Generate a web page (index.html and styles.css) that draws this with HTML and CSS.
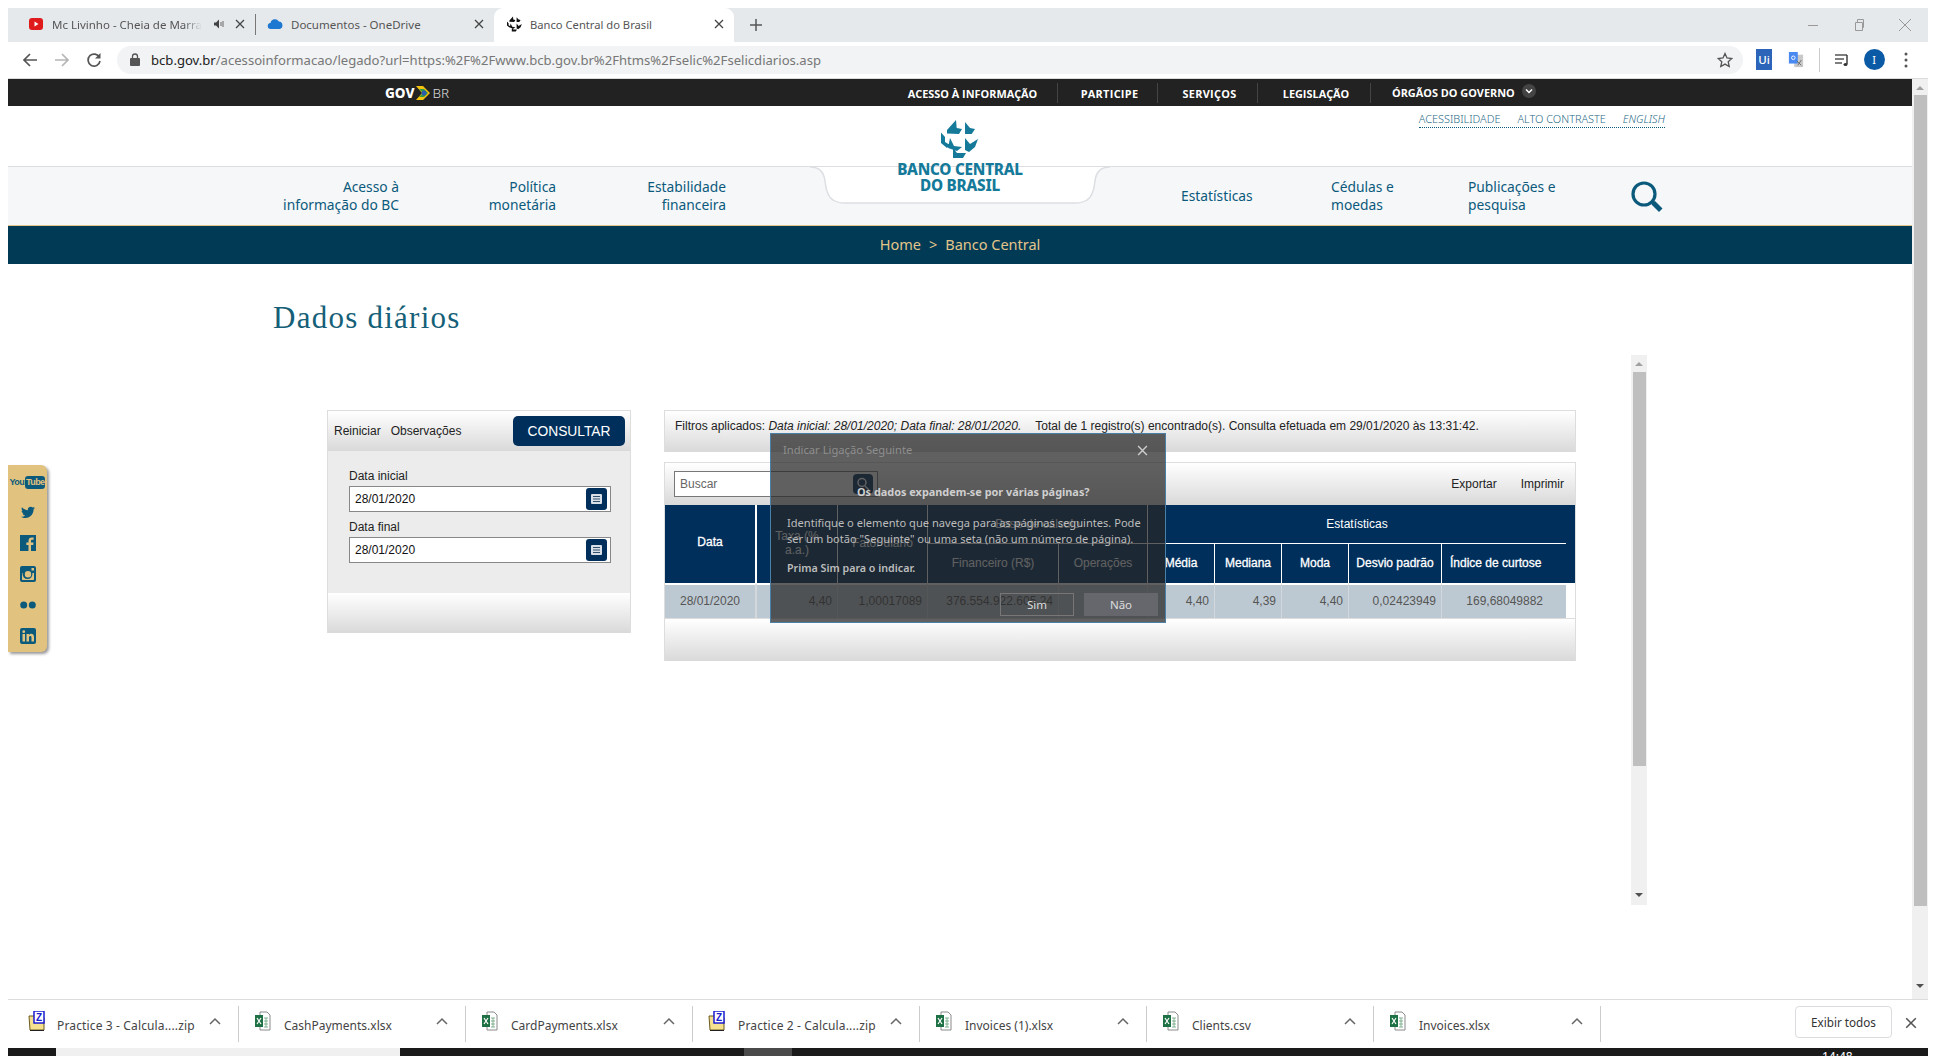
FILE: index.html
```html
<!DOCTYPE html>
<html lang="pt-BR">
<head>
<meta charset="utf-8">
<title>Banco Central do Brasil</title>
<link rel="stylesheet" href="styles.css">
</head>
<body>
<svg class="defs" aria-hidden="true">
  <symbol id="x" viewBox="0 0 10 10"><path d="M1 1l8 8M9 1l-8 8" fill="none" stroke="currentColor" stroke-width="1.3"/></symbol>
  <symbol id="bcb" viewBox="0 0 60 48">
    <path d="M26 5l.7 8 5.300 1-3 5-12-.5V15zM35 7l5 6 5 1-3.300 5H35zM11 17.500l4 4.500v5l5 3-3 3-6-5zM20 23l4 8 8 1-5 4-9-3zM23 33l4 5h9l-3 5H23zM35 23l5 6 8-5-3 8-6 5-4-2z"/>
  </symbol>
  <symbol id="excel" viewBox="0 0 16 20">
    <path d="M5 1h7l3 3v15H5z" fill="#fff" stroke="#8a8a8a"/>
    <path d="M9 7h4M9 10h4M9 13h4M9 16h4M11 7v9" stroke="#7fb08f" fill="none"/>
    <rect x="0" y="4" width="8" height="12" fill="#1e7145"/>
    <path d="M2 7l4 6M6 7l-4 6" stroke="#fff" stroke-width="1.2"/>
  </symbol>
  <symbol id="zip" viewBox="0 0 18 20">
    <path d="M1 5h12l3 2v12H2z" fill="#f4e08e" stroke="#6d5a1c"/>
    <path d="M2 19h14v1H2z" fill="#222"/>
    <rect x="6" y="0" width="10" height="12" fill="#fff" stroke="#1a1ad0" stroke-width="1.5"/>
    <text x="11" y="10" class="zip-z">Z</text>
  </symbol>
  <symbol id="cal" viewBox="0 0 21 22">
    <rect width="21" height="22" rx="3" fill="#002f5c"/>
    <rect x="5" y="6" width="11" height="10" rx="1" fill="#d8dfe6"/>
    <path d="M7 8.500h7M7 11h7M7 13.500h7" stroke="#31506e"/>
  </symbol>
  <symbol id="caret" viewBox="0 0 12 8"><path d="M1 7l5-5 5 5" fill="none" stroke="currentColor" stroke-width="1.5"/></symbol>
</svg>

<div class="screen">
  <div class="tabstrip">
    <div class="tab tab-one">
      <svg class="fav" viewBox="0 0 16 16"><rect x="1" y="2" width="14" height="12" rx="3" fill="#e01b1b"/><path d="M6.500 5.500v5l4-2.500z" fill="#fff"/></svg>
      <span class="tab-title fade">Mc Livinho - Cheia de Marra</span>
      <svg class="speaker" viewBox="0 0 12 12"><path d="M1 4.500h2l3-3v9l-3-3H1z" fill="#444"/><path d="M8 4v4M10 3v6" stroke="#666"/></svg>
      <svg class="close"><use href="#x"/></svg>
    </div>
    <div class="tab tab-two">
      <svg class="fav" viewBox="0 0 16 16"><path d="M4 13a3 3 0 0 1-.5-6 4.500 4.500 0 0 1 8.300-1.500A3.800 3.800 0 0 1 12.500 13z" fill="#1c78d0"/></svg>
      <span class="tab-title">Documentos - OneDrive</span>
      <svg class="close"><use href="#x"/></svg>
    </div>
    <div class="tab tab-active">
      <svg class="fav fav-bcb" viewBox="10 4 37 40"><use href="#bcb" width="60" height="48"/></svg>
      <span class="tab-title">Banco Central do Brasil</span>
      <svg class="close"><use href="#x"/></svg>
    </div>
    <svg class="newtab" viewBox="0 0 12 12"><path d="M6 0v12M0 6h12" stroke="#555" stroke-width="1.500"/></svg>
    <div class="winctl">
      <svg class="win" viewBox="0 0 14 14"><path d="M2 7.500h10" stroke="#999"/></svg>
      <svg class="win" viewBox="0 0 14 14"><path d="M3.500 4.500h7v8h-7zM5.500 4.500v-3h6v8h-1" fill="none" stroke="#999"/></svg>
      <svg class="win" viewBox="0 0 14 14"><path d="M1 1l12 12M13 1L1 13" stroke="#999"/></svg>
    </div>
  </div>

  <div class="toolbar">
    <div class="tool"><svg viewBox="0 0 16 16"><path d="M15 8H2M8 2L2 8l6 6" fill="none" stroke="#555" stroke-width="1.700"/></svg></div>
    <div class="tool"><svg viewBox="0 0 16 16"><path d="M1 8h13M8 2l6 6-6 6" fill="none" stroke="#b5b5b5" stroke-width="1.700"/></svg></div>
    <div class="tool"><svg viewBox="0 0 16 16"><path d="M13.500 5.500A6 6 0 1 0 14 9" fill="none" stroke="#555" stroke-width="1.700"/><path d="M14.500 1v5.500H9z" fill="#555"/></svg></div>
    <div class="omnibox">
      <svg class="lock" viewBox="0 0 10 13"><rect y="5" width="10" height="8" rx="1" fill="#555"/><path d="M2.500 5.500V3.500a2.500 2.500 0 0 1 5 0v2" fill="none" stroke="#555" stroke-width="1.300"/></svg>
      <span class="url"><span class="url-host">bcb.gov.br</span>/acessoinformacao/legado?url=https:%2F%2Fwww.bcb.gov.br%2Fhtms%2Fselic%2Fselicdiarios.asp</span>
      <svg class="star" viewBox="0 0 16 16"><path d="M8 1.500l2 4.500 4.800.5-3.600 3.200 1 4.800L8 12.100l-4.200 2.400 1-4.800L1.200 6.500 6 6z" fill="none" stroke="#555" stroke-width="1.300"/></svg>
    </div>
    <div class="tool tool-first"><span class="ext-ui">Ui</span></div>
    <div class="tool"><svg viewBox="0 0 16 18"><rect x="6" y="3" width="10" height="14" fill="#c9c9c9"/><rect x="0" y="0" width="10" height="13" fill="#4a8af0"/><path d="M9 10l5 5M14 9l-4 6" stroke="#666"/><circle cx="5" cy="6.500" r="2" fill="none" stroke="#fff"/></svg></div>
    <span class="tool-sep"></span>
    <div class="tool"><svg viewBox="0 0 16 16"><path d="M1 3h12M1 7h9M1 11h7" stroke="#555" stroke-width="1.400"/><path d="M13 3v9" stroke="#333" stroke-width="1.400"/><ellipse cx="11.500" cy="12.500" rx="2" ry="1.500" fill="#333"/></svg></div>
    <div class="tool"><span class="avatar">I</span></div>
    <div class="tool"><svg viewBox="0 0 4 16"><circle cx="2" cy="2" r="1.500" fill="#555"/><circle cx="2" cy="8" r="1.500" fill="#555"/><circle cx="2" cy="14" r="1.500" fill="#555"/></svg></div>
  </div>

  <div class="viewport">
    <div class="page">
      <div class="govbar">
        <div class="govlogo"><b>GOV</b><svg viewBox="0 0 16 14"><path d="M0 0h7l7 7-7 7H0l6-7z" fill="#f4c20d"/><path d="M3 3h5l4 4-4 4H3l4-4z" fill="#2d9a49"/><circle cx="8" cy="7" r="2.500" fill="#2a5db0"/></svg><span>BR</span></div>
        <nav class="govmenu">
          <a>ACESSO À INFORMAÇÃO</a>
          <a class="gov-wide">PARTICIPE</a>
          <a class="gov-wide">SERVIÇOS</a>
          <a class="gov-shift">LEGISLAÇÃO</a>
          <a class="govlast">ÓRGÃOS DO GOVERNO<svg class="gov-chev" viewBox="0 0 14 14"><circle cx="7" cy="7" r="7" fill="#444"/><path d="M4 5.500l3 3 3-3" fill="none" stroke="#fff" stroke-width="1.500"/></svg></a>
        </nav>
      </div>

      <header class="brand">
        <div class="quick">
          <a>ACESSIBILIDADE</a>
          <a>ALTO CONTRASTE</a>
          <a class="quick-en">ENGLISH</a>
        </div>
      </header>

      <nav class="mainnav">
        <a class="nav-l">Acesso à<br>informação do BC</a>
        <a class="nav-l">Política<br>monetária</a>
        <a class="nav-l">Estabilidade<br>financeira</a>
        <span></span>
        <a>Estatísticas</a>
        <a>Cédulas e<br>moedas</a>
        <a>Publicações e<br>pesquisa</a>
        <svg class="nav-search" viewBox="0 0 32 32"><circle cx="13" cy="13" r="11" fill="none" stroke="#0b5a7c" stroke-width="3.200"/><path d="M21 21l3-1 7.500 7.500-3.500 3.500-7.500-7.500z" fill="#0b5a7c"/></svg>
      </nav>

      <div class="crumbs"><a>Home</a><span>&gt;</span><a>Banco Central</a></div>

      <h1 class="title">Dados diários</h1>

      <main class="content">
        <section class="filters">
          <div class="filters-top">
            <a>Reiniciar</a>
            <a>Observações</a>
            <button class="consultar">CONSULTAR</button>
          </div>
          <div class="filters-body">
            <label class="flabel">Data inicial</label>
            <div class="datefield"><span>28/01/2020</span><svg class="cal"><use href="#cal"/></svg></div>
            <label class="flabel">Data final</label>
            <div class="datefield"><span>28/01/2020</span><svg class="cal"><use href="#cal"/></svg></div>
          </div>
          <div class="filters-foot"></div>
        </section>

        <section class="results">
          <div class="summary">Filtros aplicados: <i>Data inicial: 28/01/2020; Data final: 28/01/2020.</i><span class="summary-total">Total de 1 registro(s) encontrado(s). Consulta efetuada em 29/01/2020 às 13:31:42.</span></div>
          <div class="tablebox">
            <div class="tabletools">
              <div class="searchfield"><span>Buscar</span><span class="searchbtn"><svg viewBox="0 0 14 14"><circle cx="6" cy="5.500" r="4" fill="none" stroke="#fff" stroke-width="1.500"/><path d="M9 9l4 4" stroke="#fff" stroke-width="1.500"/></svg></span></div>
              <a class="tool-link">Exportar</a>
              <a class="tool-link">Imprimir</a>
            </div>
            <table class="datatable">
              <colgroup>
                <col class="c-data"><col class="c-taxa"><col class="c-fator"><col class="c-fin"><col class="c-ops">
                <col class="c-med"><col class="c-med"><col class="c-med"><col class="c-desv"><col class="c-curt"><col class="c-end">
              </colgroup>
              <thead>
                <tr class="hr1">
                  <th rowspan="2" class="th-data">Data</th>
                  <th rowspan="2" class="th-mid">Taxa (%<br>a.a.)</th>
                  <th rowspan="2" class="th-mid">Fator diário</th>
                  <th colspan="2">Base de cálculo</th>
                  <th colspan="5" class="th-stats">Estatísticas</th>
                  <th rowspan="2" class="th-end"></th>
                </tr>
                <tr class="hr2">
                  <th>Financeiro (R$)</th><th>Operações</th>
                  <th class="th-strong">Média</th><th class="th-strong">Mediana</th><th class="th-strong">Moda</th><th class="th-strong">Desvio padrão</th><th class="th-strong th-curt">Índice de curtose</th>
                </tr>
              </thead>
              <tbody>
                <tr>
                  <td class="td-c">28/01/2020</td><td>4,40</td><td>1,00017089</td><td>376.554.922.605,24</td><td class="td-ops">952</td>
                  <td>4,40</td><td>4,39</td><td>4,40</td><td>0,02423949</td><td class="td-curt">169,68049882</td><td class="td-end"></td>
                </tr>
              </tbody>
            </table>
            <div class="tablefoot"></div>
          </div>
        </section>

        <div class="inner-scroll">
          <span class="arrow-up"></span>
          <span class="inner-thumb"></span>
          <span class="arrow-down"></span>
        </div>
      </main>

      <svg class="notch" viewBox="0 0 300 38"><path d="M0 1c9 0 14 5 15 14 1 10 3 16 8 19 3 2 7 3 12 3H265c5 0 9-1 12-3 5-3 7-9 8-19 1-9 6-14 15-14" fill="#fff" stroke="#dcdee2" stroke-width="1.500"/></svg>
      <div class="logo">
        <svg class="logo-mark"><use href="#bcb"/></svg>
        <div class="logo-text">BANCO CENTRAL<br>DO BRASIL</div>
      </div>

      <aside class="social">
        <span class="yt">You<b>Tube</b></span>
        <svg viewBox="0 0 24 24"><path d="M22.460 6c-.77.35-1.600.58-2.460.69.88-.53 1.560-1.370 1.880-2.380-.83.5-1.750.85-2.720 1.050C18.370 4.500 17.260 4 16 4c-2.350 0-4.270 1.920-4.270 4.290 0 .34.04.67.11.98C8.280 9.090 5.110 7.380 3 4.790c-.37.63-.58 1.370-.58 2.150 0 1.490.75 2.810 1.910 3.560-.71 0-1.370-.2-1.950-.5v.03c0 2.080 1.480 3.820 3.440 4.210a4.220 4.220 0 0 1-1.930.07 4.280 4.280 0 0 0 4 2.980 8.521 8.521 0 0 1-5.330 1.840c-.34 0-.68-.02-1.020-.06C3.440 20.290 5.700 21 8.120 21 16 21 20.330 14.460 20.330 8.790c0-.19 0-.37-.01-.56.84-.6 1.560-1.360 2.140-2.230z"/></svg>
        <svg viewBox="0 0 16 16"><path d="M0 0h16v16h-5v-6h2.200l.3-2.500H11V6c0-.8.3-1.200 1.200-1.200h1.400V2.500c-.4 0-1-.1-1.800-.1-2 0-3.300 1.200-3.300 3.300v1.800H6.300V10h2.200v6H0z"/></svg>
        <svg viewBox="0 0 16 16"><path fill-rule="evenodd" d="M2 0h12a2 2 0 0 1 2 2v12a2 2 0 0 1-2 2H2a2 2 0 0 1-2-2V2a2 2 0 0 1 2-2zm9.500 2v2.500H14V2zM2 7v6.500c0 .3.2.5.5.5h11c.3 0 .5-.2.500-.5V7h-1.600a5 5 0 1 1-9.800 0zm6-2a3.200 3.200 0 1 0 0 6.400A3.200 3.200 0 0 0 8 5z"/></svg>
        <svg viewBox="0 0 16 16"><circle cx="3.700" cy="8" r="3.500"/><circle cx="12.300" cy="8" r="3.500"/></svg>
        <svg viewBox="0 0 16 16"><path fill-rule="evenodd" d="M2 0h12a2 2 0 0 1 2 2v12a2 2 0 0 1-2 2H2a2 2 0 0 1-2-2V2a2 2 0 0 1 2-2zm.500 6v7.500H5V6zm1.250-3.700a1.400 1.400 0 1 0 0 2.800 1.400 1.400 0 0 0 0-2.800zM6.500 6v7.500H9V9.500c0-1 .5-1.600 1.300-1.600S11.500 8.500 11.500 9.500v4H14V9c0-2.200-1.200-3.200-2.800-3.200-1.200 0-1.900.6-2.200 1.200V6z"/></svg>
      </aside>

      <div class="dialog" role="dialog">
        <div class="dialog-head"><span>Indicar Ligação Seguinte</span><svg class="dialog-x"><use href="#x"/></svg></div>
        <p class="dialog-q">Os dados expandem-se por várias páginas?</p>
        <p class="dialog-p">Identifique o elemento que navega para as páginas seguintes. Pode<br>ser um botão "Seguinte" ou uma seta (não um número de página).</p>
        <p class="dialog-b">Prima Sim para o indicar.</p>
        <div class="dialog-btns"><button class="btn-sim">Sim</button><button class="btn-nao">Não</button></div>
      </div>
    </div>

    <div class="outer-scroll">
      <span class="arrow-up"></span>
      <span class="outer-thumb"></span>
      <span class="arrow-down"></span>
    </div>
  </div>

  <div class="shelf">
    <div class="dl dl-zip dl-first"><svg class="dl-icon"><use href="#zip"/></svg><span class="dl-name">Practice 3 - Calcula....zip</span><svg class="dl-caret"><use href="#caret"/></svg></div>
    <div class="dl"><svg class="dl-icon"><use href="#excel"/></svg><span class="dl-name">CashPayments.xlsx</span><svg class="dl-caret"><use href="#caret"/></svg></div>
    <div class="dl"><svg class="dl-icon"><use href="#excel"/></svg><span class="dl-name">CardPayments.xlsx</span><svg class="dl-caret"><use href="#caret"/></svg></div>
    <div class="dl dl-zip"><svg class="dl-icon"><use href="#zip"/></svg><span class="dl-name">Practice 2 - Calcula....zip</span><svg class="dl-caret"><use href="#caret"/></svg></div>
    <div class="dl"><svg class="dl-icon"><use href="#excel"/></svg><span class="dl-name">Invoices (1).xlsx</span><svg class="dl-caret"><use href="#caret"/></svg></div>
    <div class="dl"><svg class="dl-icon"><use href="#excel"/></svg><span class="dl-name">Clients.csv</span><svg class="dl-caret"><use href="#caret"/></svg></div>
    <div class="dl"><svg class="dl-icon"><use href="#excel"/></svg><span class="dl-name">Invoices.xlsx</span><svg class="dl-caret"><use href="#caret"/></svg></div>
    <button class="showall">Exibir todos</button>
    <svg class="shelf-x"><use href="#x"/></svg>
  </div>

  <div class="taskbar">
    <span class="tb-a"></span><span class="tb-b"></span><span class="tb-a2"></span><span class="tb-c"></span>
    <span class="tb-clock">14:48</span>
  </div>
</div>
</body>
</html>
```
FILE: styles.css
```css
* { box-sizing: border-box; }
html, body { height: 100%; overflow: hidden; }
body { margin: 0; padding: 8px 0 0 8px; background: #fff; font-family: "Liberation Sans", Arial, sans-serif; font-size: 12px; color: #222; }
.defs { position: absolute; width: 0; height: 0; }
.zip-z { font: bold 10px "Liberation Sans", sans-serif; fill: #1a1ad0; text-anchor: middle; }
.screen { width: 1920px; height: 1048px; display: flex; flex-direction: column; overflow: hidden; }

/* browser chrome */
.tabstrip { height: 34px; flex: none; background: #e6e9ec; display: flex; align-items: stretch; font-family: "Noto Sans", sans-serif; font-size: 11.5px; color: #555; }
.tab { display: flex; align-items: center; position: relative; padding-bottom: 2px; }
.tab-one { width: 248px; padding-left: 20px; padding-right: 10px; }
.tab-one::after { content: ""; position: absolute; right: 0; top: 6px; bottom: 7px; width: 1px; background: #777; }
.tab-two { width: 238px; padding-left: 11px; padding-right: 10px; }
.tab-active { width: 240px; padding-left: 12px; padding-right: 10px; background: #fff; border-radius: 9px 9px 0 0; font-size: 11.2px; }
.fav { width: 16px; height: 16px; flex: none; margin-right: 8px; }
.fav-bcb { fill: #111; }
.tab-title { flex: 1; white-space: nowrap; overflow: hidden; }
.fade { max-width: 150px; -webkit-mask-image: linear-gradient(90deg, #000 88%, transparent); mask-image: linear-gradient(90deg, #000 88%, transparent); }
.speaker { width: 12px; height: 12px; margin-left: 11px; margin-right: 10px; flex: none; }
.close { width: 10px; height: 10px; flex: none; color: #444; }
.newtab { width: 12px; height: 12px; align-self: center; margin-left: 16px; }
.winctl { margin-left: auto; display: flex; align-items: center; gap: 32px; padding-right: 16px; }
.win { width: 14px; height: 14px; }
.toolbar { height: 37px; flex: none; background: #fff; border-bottom: 1px solid #dcdcdc; display: flex; align-items: center; padding: 0 0 1px 6px; }
.tool { width: 32px; display: flex; justify-content: center; align-items: center; flex: none; }
.tool svg { height: 16px; width: 16px; }
.omnibox { width: 1626px; height: 28px; margin-left: 7px; background: #f1f3f4; border-radius: 14px; display: flex; align-items: center; padding: 0 10px 0 13px; flex: none; }
.lock { width: 10px; height: 13px; margin-right: 11px; }
.url { font-family: "Noto Sans", sans-serif; font-size: 13.1px; color: #777; white-space: nowrap; }
.url-host { color: #222; }
.star { width: 16px; height: 16px; margin-left: auto; }
.tool-first { margin-left: 5px; }
.ext-ui { width: 16px; height: 21px; background: #2b64b8; color: #fff; font: 500 11.5px/21px "Noto Sans", sans-serif; text-align: center; }
.tool-sep { width: 1px; height: 24px; background: #ccc; margin: 0 6px 0 7px; }
.avatar { width: 21px; height: 21px; border-radius: 50%; background: #0b5aa5; color: #fff; font: 11px/21px "Noto Sans", sans-serif; text-align: center; }

/* viewport */
.viewport { height: 920px; flex: none; display: flex; }
.page { width: 1904px; position: relative; overflow: hidden; }
.outer-scroll { width: 16px; background: #f0f0f0; display: flex; flex-direction: column; align-items: center; padding-top: 7px; }
.outer-thumb { width: 13px; height: 811px; background: #bfbfbf; margin-top: 5px; }
.arrow-up { width: 0; height: 0; border: 4px solid transparent; border-top: 0; border-bottom: 4px solid #a0a0a0; flex: none; }
.arrow-down { width: 0; height: 0; border: 4px solid transparent; border-bottom: 0; border-top: 4px solid #505050; flex: none; }
.outer-scroll .arrow-down { margin-top: 78px; }

.govbar { height: 27px; background: #222; display: flex; align-items: center; color: #fff; }
.govlogo { display: flex; align-items: center; margin-left: 377px; width: 66px; font: 13.5px "Noto Sans", sans-serif; flex: none; white-space: nowrap; }
.govlogo b { font-weight: 800; }
.govlogo svg { width: 16px; height: 14px; margin: 0 1px; flex: none; }
.govlogo span { font-weight: 300; color: #ddd; }
.govmenu { display: grid; grid-template-columns: 170px 100px 100px 113px auto; margin-left: 437px; font: 700 10.9px "Open Sans", sans-serif; }
.govmenu a { text-align: center; border-right: 1px solid #444; line-height: 22px; height: 20px; white-space: nowrap; }
.govmenu .gov-wide { padding-left: 4px; letter-spacing: .3px; }
.govmenu .gov-shift { padding-left: 4px; }
.govmenu .govlast { border: 0; padding-left: 21px; display: flex; align-items: center; }
.gov-chev { width: 14px; height: 14px; margin: -4px 0 0 7px; }

.brand { height: 60px; display: flex; justify-content: flex-end; padding: 6px 247px 0 0; }
.quick { height: 16px; display: flex; gap: 17px; border-bottom: 1px dotted #0b5a7c; font: 10.9px/14px "Noto Sans", sans-serif; color: #1f6a86; font-weight: 300; }
.quick-en { font-style: italic; }

.mainnav { height: 60px; background: #f6f7f9; border-top: 1px solid #dcdee2; border-bottom: 1px solid #e3c58a; display: grid; grid-template-columns: 116px 157px 170px 455px 150px 137px 163px 32px; padding: 0 0 1px 275px; align-items: center; font: 13.8px/17.500px "Noto Sans", sans-serif; color: #0b5a7c; white-space: nowrap; }
.nav-l { text-align: right; }
.nav-search { width: 32px; height: 32px; margin-top: 3px; }
.crumbs { height: 38px; background: #013a55; color: #e3c58a; display: flex; justify-content: center; align-items: center; gap: 8px; font: 14.5px "Noto Sans", sans-serif; padding-bottom: 2px; }

.title { margin: 0; height: 91px; padding: 34px 0 0 265px; font: 400 31px/40px "Liberation Serif", serif; color: #155f78; letter-spacing: 1.25px; }

.content { display: flex; align-items: flex-start; padding: 0 0 0 319px; position: relative; height: 550px; }
.filters { width: 304px; margin-top: 55px; border: 1px solid #ddd; border-width: 1px 1px 0; flex: none; }
.filters-top { height: 40px; display: flex; align-items: center; padding: 0 5px 0 6px; gap: 10px; background: linear-gradient(#fff, #d9d9d9); color: #222; }
.consultar { margin-left: auto; width: 112px; height: 30px; border: 0; border-radius: 5px; background: #002f5c; color: #fff; font: 13.8px "Liberation Sans", sans-serif; }
.filters-body { height: 142px; background: #ececec; padding: 18px 21px 0 21px; }
.flabel { display: block; line-height: 15px; color: #222; }
.datefield { height: 26px; width: 262px; margin: 2px 0 8px; background: #fff; border: 1px solid #888; display: flex; align-items: center; justify-content: space-between; padding: 0 3px 0 5px; color: #111; }
.cal { width: 21px; height: 22px; }
.filters-foot { height: 40px; background: linear-gradient(#fff, #d9d9d9); }

.results { width: 912px; margin: 55px 0 0 33px; flex: none; }
.summary { height: 42px; border: 1px solid #ddd; border-bottom: 0; padding: 8px 0 0 10px; line-height: 15px; background: linear-gradient(#fff, #d9d9d9); color: #222; white-space: nowrap; }
.summary-total { margin-left: 14px; }
.tablebox { margin-top: 10px; border: 1px solid #ddd; border-bottom: 0; }
.tabletools { height: 42px; display: flex; align-items: center; padding: 0 11px 0 9px; background: linear-gradient(#fff, #d9d9d9); }
.searchfield { width: 204px; height: 26px; background: #fff; border: 1px solid #777; display: flex; align-items: center; justify-content: space-between; padding: 0 4px 0 5px; color: #666; margin-right: auto; }
.searchbtn { width: 20px; height: 20px; background: #002f5c; border-radius: 4px; display: flex; align-items: center; justify-content: center; }
.searchbtn svg { width: 14px; height: 14px; }
.tool-link { color: #222; margin-left: 24px; }
.datatable { width: 910px; table-layout: fixed; border-collapse: separate; border-spacing: 0; background: #fff; }
.c-data { width: 92px; } .c-taxa { width: 81px; } .c-fator { width: 90px; } .c-fin { width: 131px; } .c-ops { width: 89px; }
.c-med { width: 67px; } .c-desv { width: 93px; } .c-curt { width: 124px; } .c-end { width: 9px; }
.datatable th { background: #002f5c; color: #fff; font-weight: 400; border-right: 1px solid #fff; padding: 0; }
.datatable .th-data { border-right: 2px solid #fff; padding-bottom: 4px; -webkit-text-stroke: .3px #fff; }
.datatable .th-mid { padding-bottom: 2px; }
.datatable .th-strong { -webkit-text-stroke: .3px #fff; }
.datatable .th-curt { text-align: left; padding-left: 8px; border-right: 0; }
.hr1 th { height: 38px; padding-bottom: 1px; }
.hr2 th { height: 40px; border-top: 1px solid #fff; padding-bottom: 2px; }
.datatable .th-stats { border-right: 0; }
.datatable .th-end { border-right: 0; }
.datatable td { background: #bdc9d2; height: 35px; padding: 0 5px 1px 0; text-align: right; color: #555; border-right: 1px solid #d3d8dc; border-top: 2px solid #fff; }
.datatable .td-c { text-align: center; padding-right: 0; border-right-width: 2px; }
.datatable .td-ops { padding-right: 15px; }
.datatable .td-curt { padding-right: 23px; border-right: 0; }
.datatable .td-end { background: #fff; border: 0; border-top: 2px solid #fff; padding: 0; }
.tablefoot { height: 43px; border-top: 1px solid #ddd; background: linear-gradient(#fff, #d9d9d9); }

.inner-scroll { width: 16px; height: 550px; margin-left: 55px; background: #f0f0f0; display: flex; flex-direction: column; align-items: center; padding-top: 7px; flex: none; }
.inner-thumb { width: 13px; height: 394px; background: #bfbfbf; margin-top: 6px; }
.inner-scroll .arrow-down { margin-top: 127px; }

/* things lying over the page */
.notch { position: absolute; left: 802px; top: 87px; width: 300px; height: 38px; }
.logo { position: absolute; left: 889px; top: 38px; width: 126px; text-align: center; color: #157a9a; }
.logo-mark { width: 60px; height: 48px; fill: #157a9a; display: block; margin: -2px auto -2px; }
.logo-text { font: 800 15.300px/16px "Noto Sans", sans-serif; white-space: nowrap; letter-spacing: -.25px; margin: 0 -5px; }

.social { position: absolute; left: 0; top: 386px; width: 39px; height: 187px; background: #e2c27f; border-radius: 0 6px 6px 0; box-shadow: 2px 2px 3px rgba(0,0,0,.4); display: flex; flex-direction: column; align-items: center; padding-top: 11px; fill: #0b5a7c; }
.social svg { width: 16px; height: 16px; margin-top: 15px; flex: none; }
.yt { font: 700 9px/13px "Liberation Sans", sans-serif; color: #0b5a7c; white-space: nowrap; letter-spacing: -.6px; height: 13px; }
.yt b { display: inline-block; background: #0b5a7c; color: #e2c27f; border-radius: 3px; padding: 0 1px; margin-left: 1px; }

.dialog { position: absolute; left: 762px; top: 354px; width: 396px; height: 190px; background: rgba(38,38,38,.733); border: 1px solid #4a7fa8; color: #bdbdbd; font: 11.1px/16px "Noto Sans", sans-serif; }
.dialog-head { display: flex; justify-content: space-between; align-items: center; padding: 2px 17px 0 12px; height: 30px; color: #8e8e8e; font-size: 11.2px; }
.dialog-x { width: 11px; height: 11px; color: #ccc; }
.dialog-q { margin: 20px 0 0 86px; font-weight: 700; color: #cfcfcf; font-size: 10.9px; line-height: 16px; white-space: nowrap; }
.dialog-p { margin: 15px 0 0 16px; white-space: nowrap; }
.dialog-b { margin: 13px 0 0 16px; font-weight: 600; font-size: 10.7px; }
.dialog-btns { position: absolute; right: 7px; bottom: 6px; display: flex; gap: 10px; }
.dialog-btns button { width: 74px; height: 23px; font: 11.500px "Noto Sans", sans-serif; color: #ddd; border: 1px solid #777; background: transparent; padding: 0; }
.dialog-btns .btn-nao { background: #66676c; border-color: #66676c; }

/* download shelf */
.shelf { height: 49px; flex: none; border-top: 1px solid #dcdcdc; background: #fff; display: flex; align-items: center; font: 12px "Noto Sans", sans-serif; color: #444; }
.dl { width: 227px; height: 36px; padding: 0 17px 0 16px; border-right: 1px solid #ccc; display: flex; align-items: center; flex: none; }
.dl-first { width: 231px; padding-left: 20px; }
.dl-zip { padding-left: 15px; }
.dl-icon { width: 16px; height: 20px; margin: -6px 13px 0 0; flex: none; }
.dl-zip .dl-icon { width: 18px; margin-right: 12px; }
.dl-first.dl-zip { padding-left: 20px; }
.dl-first .dl-icon { margin-right: 11px; }
.dl-name { flex: 1; white-space: nowrap; padding-top: 2px; }
.dl-zip .dl-name { letter-spacing: .14px; }
.dl-caret { width: 12px; height: 8px; color: #666; margin-top: -6px; }
.showall { margin: -4px 0 0 194px; width: 97px; height: 32px; background: #fff; border: 1px solid #dadce0; border-radius: 4px; font: 11.7px "Noto Sans", sans-serif; color: #333; padding: 0; flex: none; }
.shelf-x { width: 12px; height: 12px; margin: -3px 0 0 13px; color: #555; flex: none; }
.taskbar { height: 8px; flex: none; background: #1a1a1a; display: flex; overflow: hidden; position: relative; }
.tb-a { width: 48px; }
.tb-b { width: 344px; background: #f0f0f0; }
.tb-a2 { width: 344px; }
.tb-c { width: 48px; background: #4a4a4a; }
.tb-clock { margin-left: 1030px; color: #fff; font: 12px/12px "Noto Sans", sans-serif; padding-top: 3px; }
```
